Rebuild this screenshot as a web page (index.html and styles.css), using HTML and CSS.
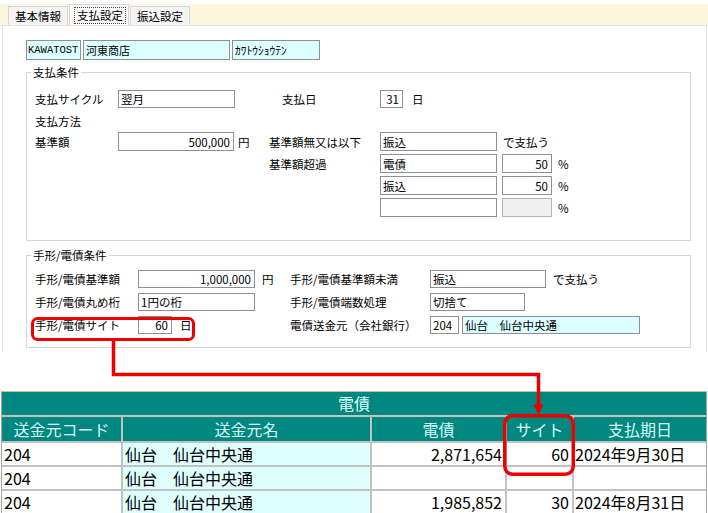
FILE: index.html
```html
<!DOCTYPE html>
<html lang="ja">
<head>
<meta charset="utf-8">
<title>支払設定</title>
<link rel="stylesheet" href="styles.css">
</head>
<body>
<div class="page">
  <div class="tabbar">
    <div class="tab">基本情報</div>
    <div class="tab active"><span class="focus">支払設定</span></div>
    <div class="tab">振込設定</div>
  </div>

  <div class="panel">
    <div class="head">
      <span class="box cyan code">KAWATOST</span>
      <span class="box cyan name">河東商店</span>
      <span class="box cyan kana">ｶﾜﾄｳｼｮｳﾃﾝ</span>
    </div>

    <fieldset class="group g1">
      <legend>支払条件</legend>
      <div class="gbody">
        <div class="row">
          <span class="lbl w83">支払サイクル</span>
          <span class="box w117">翌月</span>
          <span class="lbl lbl-day">支払日</span>
          <span class="box num w23">31</span>
          <span class="unit u9">日</span>
        </div>
        <div class="subhead">支払方法</div>
        <div class="method">
          <div class="row base">
            <span class="lbl w83">基準額</span>
            <span class="box num w116">500,000</span>
            <span class="unit u4">円</span>
          </div>
          <div class="split">
            <span class="lbl">基準額無又は以下</span>
            <span class="box w117">振込</span>
            <span class="suffix">で支払う</span>

            <span class="lbl">基準額超過</span>
            <span class="box w117">電債</span>
            <span class="box num w50">50</span>
            <span class="pct">%</span>

            <span class="lbl"></span>
            <span class="box w117">振込</span>
            <span class="box num w50">50</span>
            <span class="pct">%</span>

            <span class="lbl"></span>
            <span class="box w117"></span>
            <span class="box disabled w50"></span>
            <span class="pct">%</span>
          </div>
        </div>
      </div>
    </fieldset>

    <fieldset class="group g2">
      <legend>手形/電債条件</legend>
      <div class="gbody g2body">
        <span class="lbl">手形/電債基準額</span>
        <span class="cell"><span class="box num w117">1,000,000</span><span class="unit u7">円</span></span>
        <span class="lbl">手形/電債基準額未満</span>
        <span class="cell"><span class="box w116">振込</span><span class="unit u7">で支払う</span></span>

        <span class="lbl">手形/電債丸め桁</span>
        <span class="cell"><span class="box w117">1円の桁</span></span>
        <span class="lbl">手形/電債端数処理</span>
        <span class="cell"><span class="box w95">切捨て</span></span>

        <span class="lbl">手形/電債サイト</span>
        <span class="cell"><span class="box num w34">60</span><span class="unit u8">日</span></span>
        <span class="lbl">電債送金元（会社銀行）</span>
        <span class="cell"><span class="box w29">204</span><span class="box cyan w178 gap3">仙台　仙台中央通</span></span>
      </div>
    </fieldset>
  </div>

  <div class="grid">
    <div class="title">電債</div>
    <div class="th">送金元コード</div>
    <div class="th">送金元名</div>
    <div class="th">電債</div>
    <div class="th">サイト</div>
    <div class="th">支払期日</div>

    <div class="td">204</div>
    <div class="td cyan">仙台　仙台中央通</div>
    <div class="td r">2,871,654</div>
    <div class="td r">60</div>
    <div class="td d">2024年9月30日</div>

    <div class="td">204</div>
    <div class="td cyan">仙台　仙台中央通</div>
    <div class="td r"></div>
    <div class="td r"></div>
    <div class="td d"></div>

    <div class="td">204</div>
    <div class="td cyan">仙台　仙台中央通</div>
    <div class="td r">1,985,852</div>
    <div class="td r">30</div>
    <div class="td d">2024年8月31日</div>
  </div>

  <svg class="annot" width="708" height="513" viewBox="0 0 708 513" aria-hidden="true">
    <rect x="32.5" y="314.5" width="161" height="21" rx="5" fill="none" stroke="#ee0000" stroke-width="3"/>
    <path d="M113.5 336 V370.5 H538.5 V402" fill="none" stroke="#ee0000" stroke-width="3.5"/>
    <path d="M533.5 400.5 L543.5 400.5 L538.5 411 Z" fill="#ee0000"/>
    <rect x="504.75" y="411.75" width="68.5" height="58.5" rx="8" fill="none" stroke="#ee0000" stroke-width="3.5"/>
  </svg>
</div>
</body>
</html>
```

FILE: styles.css
```css
* { box-sizing: border-box; }

html, body {
  margin: 0;
  padding: 0;
}

body {
  width: 708px;
  height: 513px;
  overflow: hidden;
  background: #ffffff;
  color: #000000;
  font-family: "Noto Sans CJK JP", "Noto Sans", sans-serif;
}

.page {
  position: relative;
  width: 708px;
  height: 513px;
}

/* ---------- tabs ---------- */
.tabbar {
  margin-top: 4px;
  height: 22px;
  background: #fdf5dc;
  border-bottom: 1px solid #e2e2e2;
  display: flex;
  align-items: flex-end;
  padding-left: 8px;
}

.tab {
  height: 19px;
  padding: 0 6px;
  margin-right: 1px;
  background: #f4f4f4;
  border: 1px solid #d6d6d6;
  border-bottom: none;
  font-size: 11.5px;
  line-height: 18px;
  white-space: nowrap;
}

.tab.active {
  height: 21px;
  padding: 2px 2px 0 4px;
  background: #fbfbfb;
}

.focus {
  display: block;
  border: 1px dotted #444;
  padding: 0 2px;
  line-height: 15px;
}

/* ---------- form panel ---------- */
.panel {
  margin-left: 2px;
  width: 705px;
  border-left: 1px solid #e3e3e3;
  border-right: 1px solid #e3e3e3;
  padding: 14px 0 4px 23px;
  font-size: 11.5px;
  line-height: 14px;
}

.head {
  display: flex;
  gap: 2px;
  height: 20px;
}

.box {
  display: flex;
  align-items: center;
  flex: none;
  height: 100%;
  padding: 0 2px;
  border: 1px solid #8e8f99;
  background: #ffffff;
  white-space: nowrap;
  overflow: hidden;
  font-size: 11.5px;
}

.box.num { justify-content: flex-end; padding-right: 3px; }
.box.cyan { background: #dcffff; }
.box.disabled { background: #efefef; border-color: #b3b3b3; }

.head .code { width: 55px; font-family: "Liberation Mono", monospace; font-size: 10.5px; padding-left: 1px; }
.head .name { width: 147px; font-size: 11px; }
.head .kana { width: 88px; font-size: 11.5px; }

.w23 { width: 23px; }
.w29 { width: 29px; }
.w34 { width: 34px; }
.w50 { width: 50px; }
.w95 { width: 95px; }
.w116 { width: 116px; }
.w117 { width: 117px; }
.w178 { width: 178px; }
.gap3 { margin-left: 3px; }

.lbl { white-space: nowrap; flex: none; }
.lbl.w83 { width: 83px; }
.lbl-day { margin-left: 47px; width: 98px; }

.unit { flex: none; white-space: nowrap; }
.u4 { margin-left: 4px; }
.u7 { margin-left: 7px; }
.u8 { margin-left: 8px; }
.u9 { margin-left: 9px; }

/* ---------- group boxes ---------- */
.group {
  margin: 5px 0 0;
  padding: 0;
  width: 665px;
  min-width: 0;
  border: 1px solid #d6d6d6;
}

.group legend {
  margin-left: 4px;
  padding: 0 2px;
  font-size: 11.5px;
  line-height: 14px;
}

.g1 .gbody {
  padding: 11px 0 23px 8px;
}

.row {
  display: flex;
  align-items: center;
  height: 18px;
}

.subhead {
  margin-top: 6px;
  height: 14px;
}

.method {
  margin-top: 4px;
  display: flex;
  align-items: flex-start;
}

.row.base {
  width: 234px;
  height: 19px;
}

.split {
  display: grid;
  grid-template-columns: 111px 122px 56px auto;
  grid-auto-rows: 19px;
  row-gap: 3px;
  align-items: center;
}

.split .box { height: 19px; }
.suffix { padding-left: 1px; white-space: nowrap; grid-column: 3 / span 2; }
.pct { white-space: nowrap; }

.g2 { margin-top: 7px; }

.g2body {
  padding: 8px 0 13px 8px;
  display: grid;
  grid-template-columns: 103px 152px 140px auto;
  grid-auto-rows: 18px;
  row-gap: 5px;
  align-items: center;
}

.cell {
  display: flex;
  align-items: center;
  height: 18px;
}

/* ---------- data grid ---------- */
.grid {
  margin: 39px 0 0 1px;
  width: 706px;
  display: grid;
  grid-template-columns: 119px 247px 133px 65px 132px;
  grid-template-rows: 23px 24px 22px 22px 22px;
  gap: 2px;
  background: #c2c2c2;
  border-top: 1px solid #cbbf9f;
  border-left: 1px solid #a9a9a9;
  border-right: 1px solid #a9a9a9;
  font-size: 16px;
  line-height: 22px;
}

.title {
  grid-column: 1 / -1;
  background: #00877f;
  color: #e0ffff;
  text-align: center;
  line-height: 23px;
}

.th {
  background: #00877f;
  color: #d8fafa;
  text-align: center;
  line-height: 24px;
  white-space: nowrap;
}

.td {
  background: #ffffff;
  padding: 0 2px;
  white-space: nowrap;
  overflow: hidden;
}

.td.cyan { background: #dfffff; }
.td.r { text-align: right; padding-right: 3px; }
.td.d { padding-left: 1px; }

/* ---------- annotation overlay ---------- */
.annot {
  position: absolute;
  left: 0;
  top: 0;
  pointer-events: none;
}
```
